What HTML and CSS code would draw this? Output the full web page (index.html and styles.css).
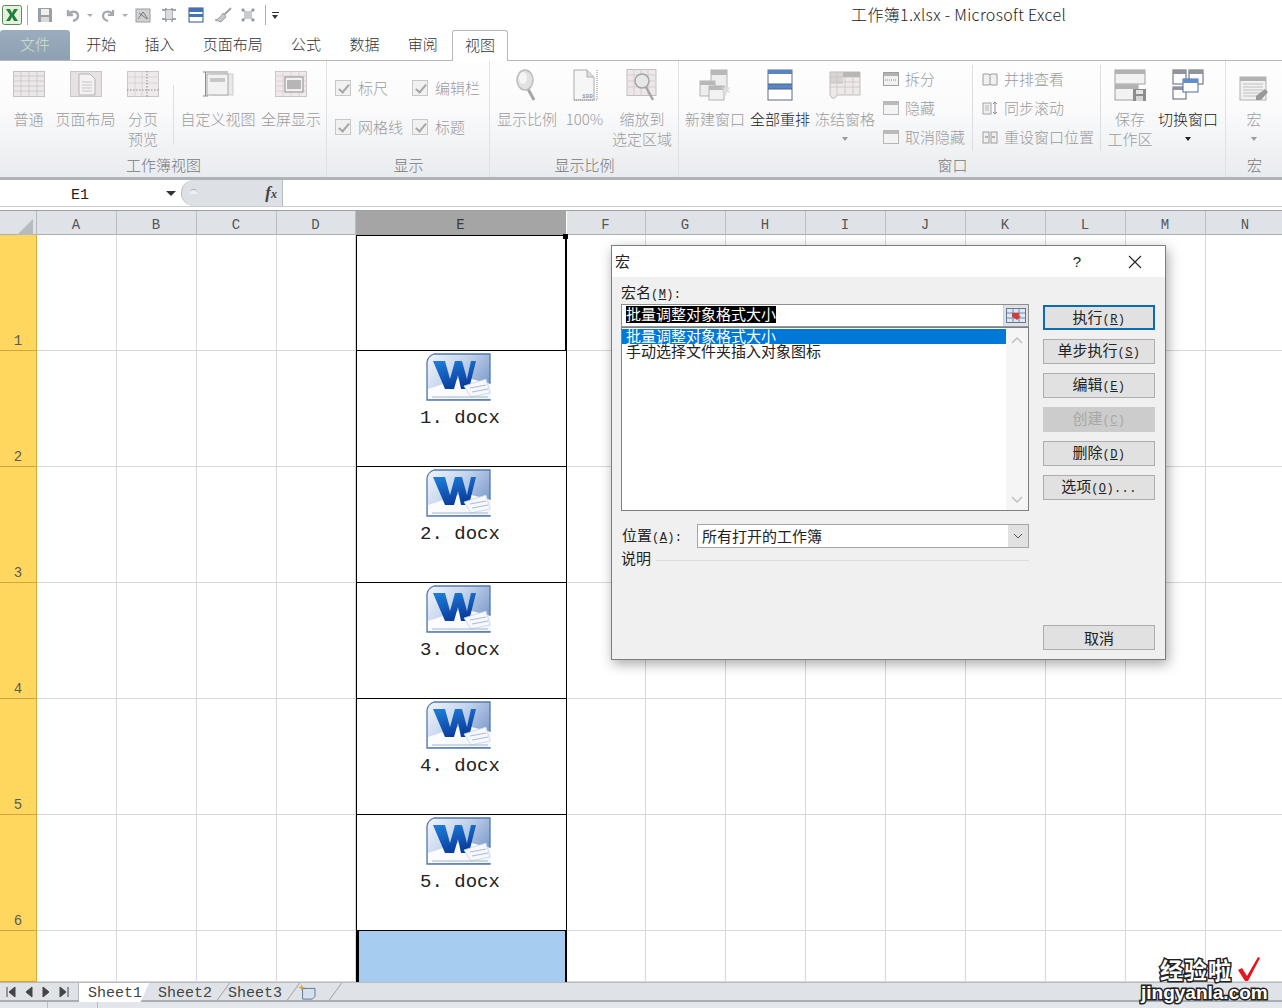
FILE: index.html
```html
<!DOCTYPE html>
<html lang="zh-CN">
<head>
<meta charset="utf-8">
<title>工作簿1.xlsx - Microsoft Excel</title>
<link rel="stylesheet" href="styles.css">
</head>
<body>
<svg class="defs" width="0" height="0" aria-hidden="true">
  <defs>
    <linearGradient id="wordbg" x1="0" y1="0" x2="1" y2="0.6"><stop offset="0" stop-color="#f2f6fc"/><stop offset=".5" stop-color="#c4d4ec"/><stop offset="1" stop-color="#7e9ccc"/></linearGradient>
    <linearGradient id="wordw" x1="0" y1="0" x2="0.4" y2="1"><stop offset="0" stop-color="#1f7fdc"/><stop offset="1" stop-color="#0a3d9c"/></linearGradient>
    <symbol id="word" viewBox="0 0 66 48">
      <path d="M8 1H64V47H1V9Q2 3 8 1Z" fill="url(#wordbg)" stroke="#5478b0" stroke-width="1.3"/>
      <path d="M2 36L38 24L65 31V46H2Z" fill="#fff" opacity=".92"/>
      <path d="M7 8H19L24 26L29 8H36L41 26L45 8H50L43 36H35L32 22L28 36H19Z" fill="url(#wordw)"/>
      <path d="M38 33L60 26L64 40L45 44Z" fill="#f6f8fc" stroke="#c4d0e4" stroke-width=".8"/>
      <path d="M44 35L60 32M46 39L62 36" stroke="#a9bbd8" fill="none"/>
      <path d="M6 44H62" stroke="#9fb5d8"/>
    </symbol>
    <symbol id="i-normal" viewBox="0 0 32 26"><rect x=".5" y=".5" width="31" height="25" fill="#ebe8e9" stroke="#c4c1c2"/><path d="M0 5H32M0 10H32M0 15H32M0 20H32M8 0V26M16 0V26M24 0V26" stroke="#d0c8ca"/></symbol>
    <symbol id="i-page" viewBox="0 0 32 26"><rect x=".5" y=".5" width="31" height="25" fill="#e6e2e4" stroke="#c9c6c8"/><path d="M9 3H20L25 8V24H9Z" fill="#f4f3f3" stroke="#b5b3b3"/><path d="M12 11H22M12 14H22M12 17H22M12 20H22" stroke="#c6c3c3"/></symbol>
    <symbol id="i-break" viewBox="0 0 32 26"><rect x=".5" y=".5" width="31" height="25" fill="#eeeaec" stroke="#c9c6c8"/><path d="M0 6H32M0 12H32M8 0V26M15 0V26" stroke="#dad2d4"/><path d="M0 19H32M20 0V26" stroke="#8e8c8c" stroke-dasharray="1.5 1.5"/></symbol>
    <symbol id="i-custom" viewBox="0 0 32 26"><rect x="9" y="3" width="22" height="21" fill="#e9e7e7" stroke="#cfcccc"/><rect x="5" y="3" width="21" height="21" fill="#f3f2f2" stroke="#a9a7a7"/><rect x="8" y="7" width="15" height="4" fill="#c9c6c6"/><path d="M1 1H6M3.5 1V25M1 25H6M6 1H26" stroke="#8d8b8b" fill="none"/></symbol>
    <symbol id="i-full" viewBox="0 0 32 26"><rect x=".5" y=".5" width="31" height="25" fill="#eee9ea" stroke="#c9c6c8"/><path d="M0 5H32M0 10H32M0 15H32M0 20H32M8 0V26M16 0V26M24 0V26" stroke="#ddd0d2"/><rect x="10" y="6" width="18" height="15" fill="#f2f1f1" stroke="#8f8d8d"/><rect x="12" y="9" width="14" height="9" fill="#b7b5b5"/></symbol>
    <symbol id="i-zoom" viewBox="0 0 32 32"><path d="M16 18L23 31" stroke="#a8a5a5" stroke-width="3"/><ellipse cx="14" cy="11" rx="8" ry="10" fill="#e2e1e1" stroke="#bdbbbb" stroke-width="1.5"/><ellipse cx="12" cy="9" rx="4" ry="6" fill="#f5f5f5"/></symbol>
    <symbol id="i-100" viewBox="0 0 32 32"><path d="M5 1H18L25 8V31H5Z" fill="#f6f6f6" stroke="#adabab"/><path d="M18 1V8H25" fill="#ddd" stroke="#adabab"/><path d="M28 1V31M5 31H29" stroke="#8b8b8b" stroke-dasharray="1 1"/><text class="svg-tiny" x="13" y="29">100</text></symbol>
    <symbol id="i-fit" viewBox="0 0 32 32"><rect x="1" y=".5" width="29" height="26" fill="#ece8e9" stroke="#c3bfc1"/><path d="M1 6H30M1 12H30M1 18H30M8 0V26M15 0V26M22 0V26" stroke="#d7cccf"/><path d="M20 18L27 31" stroke="#a8a5a5" stroke-width="2.5"/><circle cx="16" cy="12" r="7" fill="#e8e7e7" stroke="#a6a4a4" stroke-width="1.5"/></symbol>
    <symbol id="i-new" viewBox="0 0 32 32"><rect x="12" y="1" width="16" height="20" fill="#eee" stroke="#b5b3b3"/><rect x="12" y="1" width="16" height="5" fill="#b9b7b7"/><rect x="1" y="12" width="15" height="15" fill="#eee" stroke="#b5b3b3"/><rect x="1" y="12" width="15" height="4" fill="#b9b7b7"/><rect x="10" y="17" width="15" height="14" fill="#f2f2f2" stroke="#b5b3b3"/><rect x="10" y="17" width="15" height="4" fill="#b9b7b7"/><path d="M27 14L28 19L32 18L29 21L32 24L28 23L27 28L25 23L22 24L25 21L22 18L26 19Z" fill="#dedcdc"/></symbol>
    <symbol id="i-arrange" viewBox="0 0 26 32"><rect x="1" y="1" width="24" height="30" fill="#fff" stroke="#5e6d80"/><rect x="1" y="1" width="24" height="4" fill="#5a85c4"/><rect x="1" y="15" width="24" height="5" fill="#5a85c4"/><path d="M1 15H25M1 20H25" stroke="#49648f"/></symbol>
    <symbol id="i-freeze" viewBox="0 0 32 32"><path d="M1 3H31V26H8L6 29H3L1 26Z" fill="#eeeaea" stroke="#bfbcbc"/><path d="M1 8H31M1 13H31M1 18H31M8 3V26M16 3V26M24 3V26" stroke="#d0c9c9"/><path d="M1 3H14V15H1Z" fill="#c9c5c5" opacity=".6"/><path d="M14 3H31V8H14Z" fill="#b9b6b6"/></symbol>
    <symbol id="i-savews" viewBox="0 0 32 32"><rect x="1" y="1" width="30" height="14" fill="#f2f2f2" stroke="#a2a0a0"/><rect x="1" y="1" width="30" height="4" fill="#b3b1b1"/><rect x="1" y="16" width="23" height="15" fill="#f2f2f2" stroke="#a2a0a0"/><rect x="1" y="16" width="23" height="4" fill="#b3b1b1"/><rect x="19" y="20" width="13" height="12" fill="#8d8b8b"/><rect x="22" y="21" width="7" height="4" fill="#e4e4e4"/><rect x="22" y="27" width="7" height="5" fill="#d5d5d5"/></symbol>
    <symbol id="i-switch" viewBox="0 0 32 32"><rect x="1" y="1" width="13" height="14" fill="#fff" stroke="#5d646c"/><rect x="1" y="1" width="13" height="4" fill="#8e959c"/><rect x="17" y="1" width="14" height="14" fill="#fff" stroke="#5d646c"/><rect x="17" y="1" width="14" height="4" fill="#8e959c"/><rect x="1" y="18" width="13" height="12" fill="#fff" stroke="#5d646c"/><rect x="1" y="18" width="13" height="3" fill="#8e959c"/><rect x="11" y="10" width="15" height="13" fill="#fff" stroke="#4c6d9c"/><rect x="11" y="10" width="15" height="4" fill="#5f8fce"/></symbol>
    <symbol id="i-macro" viewBox="0 0 30 32"><rect x="1" y="8" width="26" height="23" fill="#f1f1f1" stroke="#b2b0b0"/><rect x="1" y="8" width="26" height="4" fill="#b3b1b1"/><path d="M4 15H24M4 18H24M4 21H24M4 24H24M4 27H24" stroke="#c1bfbf"/><path d="M17 27L26 20L29 23L22 31H17Z" fill="#999"/></symbol>
    <symbol id="s-split" viewBox="0 0 16 14"><rect x=".5" y=".5" width="15" height="13" fill="#f1f1f1" stroke="#9f9d9d"/><rect x="1" y="1" width="14" height="3" fill="#b3b1b1"/><path d="M2 8H14" stroke="#8f8d8d" stroke-dasharray="1 1"/></symbol>
    <symbol id="s-hide" viewBox="0 0 16 14"><rect x=".5" y=".5" width="15" height="13" fill="#f4f4f4" stroke="#b8b6b6"/><rect x="1" y="1" width="14" height="3" fill="#bbb9b9"/></symbol>
    <symbol id="s-side" viewBox="0 0 16 14"><path d="M1 2H7L8 3L9 2H15V13H9L8 12L7 13H1Z" fill="#f1f1f1" stroke="#9f9d9d"/><path d="M8 3V12" stroke="#9f9d9d"/></symbol>
    <symbol id="s-sync" viewBox="0 0 16 14"><rect x="1" y="2" width="8" height="11" fill="#efefef" stroke="#a6a4a4"/><path d="M3 5H7M3 7H7M3 9H7" stroke="#b9b7b7"/><path d="M13 1V13M11 3L13 1L15 3M11 11L13 13L15 11" fill="none" stroke="#8f8d8d"/></symbol>
    <symbol id="s-reset" viewBox="0 0 16 14"><rect x="1" y="2" width="6" height="11" fill="#efefef" stroke="#9f9d9d"/><rect x="9" y="2" width="6" height="11" fill="#efefef" stroke="#9f9d9d"/><path d="M3 7H6M13 7H10" stroke="#777"/></symbol>
  </defs>
</svg>

<div class="app">
  <header class="titlebar">
    <svg class="logo" viewBox="0 0 20 20" width="20" height="20"><rect x=".5" y=".5" width="19" height="19" rx="2" fill="#e6f0dd" stroke="#5c8a55"/><path d="M4 4H8L10 8L12 4H16L12 10L16 16H12L10 12L8 16H4L8 10Z" fill="#20813c"/></svg>
    <span class="qat-sep"></span>
    <svg class="qat q-save" viewBox="0 0 16 16" width="16" height="16"><path d="M1 1H14L15 2V15H1Z" fill="#9a9fa5"/><rect x="4" y="2" width="8" height="6" fill="#eee"/><rect x="4" y="10" width="8" height="5" fill="#d9d9d9"/></svg>
    <svg class="qat q-undo" viewBox="0 0 16 16" width="16" height="16"><path d="M3 3V8H8M3 8C6 3 13 4 13 9C13 12 11 13 8 14" fill="none" stroke="#a5a9ae" stroke-width="2.4"/></svg>
    <span class="qat-caret q-c1"></span>
    <svg class="qat q-redo" viewBox="0 0 16 16" width="16" height="16"><path d="M13 3V8H8M13 8C10 3 3 4 3 9C3 12 5 13 8 14" fill="none" stroke="#a5a9ae" stroke-width="2.2"/></svg>
    <span class="qat-caret q-c2"></span>
    <svg class="qat q-a" viewBox="0 0 16 16" width="16" height="16"><rect x="1" y="2" width="14" height="13" fill="#cfd1d2" stroke="#9b9da0"/><path d="M3 12L8 5L13 12M4 6L12 12" stroke="#777a7d" fill="none"/></svg>
    <svg class="qat q-b" viewBox="0 0 16 16" width="16" height="16"><path d="M1 3H15M1 12H15M5 1V15M11 1V15" stroke="#888c90" stroke-width="1.3" fill="none"/><rect x="5" y="3" width="6" height="9" fill="#d9dbdc"/></svg>
    <svg class="qat q-c" viewBox="0 0 16 16" width="16" height="16"><rect x="1" y="1" width="14" height="14" fill="#fff" stroke="#33557f"/><rect x="1" y="1" width="14" height="4" fill="#3f74bb"/><rect x="1" y="7" width="14" height="3" fill="#3f74bb"/></svg>
    <svg class="qat q-d" viewBox="0 0 18 16" width="18" height="16"><path d="M17 1L9 9" stroke="#9ea1a4" stroke-width="2"/><path d="M9 6L12 10L7 15L1 13C5 12 7 9 9 6Z" fill="#c4c7c9" stroke="#a3a6a8"/></svg>
    <svg class="qat q-e" viewBox="0 0 16 16" width="16" height="16"><path d="M3 3L13 13M13 3L3 13" stroke="#9da1a5" stroke-width="1.2"/><rect x="4" y="4" width="8" height="8" fill="#c9ccce"/><path d="M1 3H5M3 1V5M11 3H15M13 1V5M1 13H5M3 11V15M11 13H15M13 11V15" stroke="#8a8d90"/></svg>
    <span class="qat-sep q-sep2"></span>
    <span class="qat-more"></span>
    <h1 class="app-title">工作簿1.xlsx - Microsoft Excel</h1>
  </header>

  <nav class="tabs">
    <span class="tab-file">文件</span>
    <span class="tab">开始</span>
    <span class="tab">插入</span>
    <span class="tab">页面布局</span>
    <span class="tab">公式</span>
    <span class="tab">数据</span>
    <span class="tab">审阅</span>
    <span class="tab tab-on">视图</span>
  </nav>

  <section class="ribbon">
    <div class="group g-views">
      <div class="group-body">
        <div class="big w57"><svg class="ic" width="32" height="26"><use href="#i-normal"/></svg><span>普通</span></div>
        <div class="big w57"><svg class="ic" width="32" height="26"><use href="#i-page"/></svg><span>页面布局</span></div>
        <div class="big w58"><svg class="ic" width="32" height="26"><use href="#i-break"/></svg><span>分页<br>预览</span></div>
        <span class="vsep vs-views"></span>
        <div class="big w78"><svg class="ic" width="32" height="26"><use href="#i-custom"/></svg><span>自定义视图</span></div>
        <div class="big w68"><svg class="ic" width="32" height="26"><use href="#i-full"/></svg><span>全屏显示</span></div>
      </div>
      <div class="group-name">工作簿视图</div>
    </div>
    <div class="group g-show">
      <div class="group-body checks">
        <label class="check"><span class="box"></span>标尺</label>
        <label class="check"><span class="box"></span>编辑栏</label>
        <label class="check"><span class="box"></span>网格线</label>
        <label class="check"><span class="box"></span>标题</label>
      </div>
      <div class="group-name">显示</div>
    </div>
    <div class="group g-zoom">
      <div class="group-body">
        <div class="big w60"><svg class="ic" width="32" height="32"><use href="#i-zoom"/></svg><span>显示比例</span></div>
        <div class="big w55"><svg class="ic" width="32" height="32"><use href="#i-100"/></svg><span>100%</span></div>
        <div class="big w60"><svg class="ic" width="32" height="32"><use href="#i-fit"/></svg><span>缩放到<br>选定区域</span></div>
      </div>
      <div class="group-name">显示比例</div>
    </div>
    <div class="group g-window">
      <div class="group-body">
        <div class="big w60"><svg class="ic" width="32" height="32"><use href="#i-new"/></svg><span>新建窗口</span></div>
        <div class="big w60 on"><svg class="ic" width="26" height="32"><use href="#i-arrange"/></svg><span>全部重排</span></div>
        <div class="big w60"><svg class="ic" width="32" height="32"><use href="#i-freeze"/></svg><span>冻结窗格</span><i class="caret"></i></div>
        <div class="smalls s-a">
          <div class="small"><svg width="16" height="14"><use href="#s-split"/></svg><span>拆分</span></div>
          <div class="small"><svg width="16" height="14"><use href="#s-hide"/></svg><span>隐藏</span></div>
          <div class="small"><svg width="16" height="14"><use href="#s-hide"/></svg><span>取消隐藏</span></div>
        </div>
        <span class="vsep vs-tall"></span>
        <div class="smalls s-b">
          <div class="small"><svg width="16" height="14"><use href="#s-side"/></svg><span>并排查看</span></div>
          <div class="small"><svg width="16" height="14"><use href="#s-sync"/></svg><span>同步滚动</span></div>
          <div class="small"><svg width="16" height="14"><use href="#s-reset"/></svg><span>重设窗口位置</span></div>
        </div>
        <span class="vsep vs-tall"></span>
        <div class="big w46 first-ws"><svg class="ic" width="32" height="32"><use href="#i-savews"/></svg><span>保存<br>工作区</span></div>
        <div class="big w60 on"><svg class="ic" width="32" height="32"><use href="#i-switch"/></svg><span>切换窗口</span><i class="caret"></i></div>
      </div>
      <div class="group-name">窗口</div>
    </div>
    <div class="group g-macro">
      <div class="group-body">
        <div class="big w56"><svg class="ic" width="30" height="32"><use href="#i-macro"/></svg><span>宏</span><i class="caret"></i></div>
      </div>
      <div class="group-name">宏</div>
    </div>
  </section>

  <section class="formula">
    <div class="namebox"><span class="name-val">E1</span><i class="name-caret"></i></div>
    <div class="fx-wrap"><span class="fx-dot"></span><span class="fx">f<small>x</small></span></div>
    <div class="fx-input"></div>
  </section>

  <section class="sheet">
    <div class="row head">
      <div class="corner"><svg width="17" height="17" viewBox="0 0 17 17"><path d="M17 0V17H0Z" fill="#b6bbc1"/></svg></div>
      <div class="ch">A</div><div class="ch">B</div><div class="ch">C</div><div class="ch">D</div><div class="ch ch-on">E</div><div class="ch">F</div><div class="ch">G</div><div class="ch">H</div><div class="ch">I</div><div class="ch">J</div><div class="ch">K</div><div class="ch">L</div><div class="ch">M</div><div class="ch">N</div>
    </div>
    <div class="row r-tall">
      <div class="rh">1</div><div class="c"></div><div class="c"></div><div class="c"></div><div class="c"></div>
      <div class="e e-active"><i class="handle"></i></div>
      <div class="c"></div><div class="c"></div><div class="c"></div><div class="c"></div><div class="c"></div><div class="c"></div><div class="c"></div><div class="c"></div><div class="c"></div>
    </div>
    <div class="row r-tall">
      <div class="rh">2</div><div class="c"></div><div class="c"></div><div class="c"></div><div class="c"></div>
      <div class="e"><svg class="word" width="66" height="48"><use href="#word"/></svg><span class="fname">1. docx</span></div>
      <div class="c"></div><div class="c"></div><div class="c"></div><div class="c"></div><div class="c"></div><div class="c"></div><div class="c"></div><div class="c"></div><div class="c"></div>
    </div>
    <div class="row r-tall">
      <div class="rh">3</div><div class="c"></div><div class="c"></div><div class="c"></div><div class="c"></div>
      <div class="e"><svg class="word" width="66" height="48"><use href="#word"/></svg><span class="fname">2. docx</span></div>
      <div class="c"></div><div class="c"></div><div class="c"></div><div class="c"></div><div class="c"></div><div class="c"></div><div class="c"></div><div class="c"></div><div class="c"></div>
    </div>
    <div class="row r-tall">
      <div class="rh">4</div><div class="c"></div><div class="c"></div><div class="c"></div><div class="c"></div>
      <div class="e"><svg class="word" width="66" height="48"><use href="#word"/></svg><span class="fname">3. docx</span></div>
      <div class="c"></div><div class="c"></div><div class="c"></div><div class="c"></div><div class="c"></div><div class="c"></div><div class="c"></div><div class="c"></div><div class="c"></div>
    </div>
    <div class="row r-tall">
      <div class="rh">5</div><div class="c"></div><div class="c"></div><div class="c"></div><div class="c"></div>
      <div class="e"><svg class="word" width="66" height="48"><use href="#word"/></svg><span class="fname">4. docx</span></div>
      <div class="c"></div><div class="c"></div><div class="c"></div><div class="c"></div><div class="c"></div><div class="c"></div><div class="c"></div><div class="c"></div><div class="c"></div>
    </div>
    <div class="row r-tall">
      <div class="rh">6</div><div class="c"></div><div class="c"></div><div class="c"></div><div class="c"></div>
      <div class="e"><svg class="word" width="66" height="48"><use href="#word"/></svg><span class="fname">5. docx</span></div>
      <div class="c"></div><div class="c"></div><div class="c"></div><div class="c"></div><div class="c"></div><div class="c"></div><div class="c"></div><div class="c"></div><div class="c"></div>
    </div>
    <div class="row r-last">
      <div class="rh"></div><div class="c"></div><div class="c"></div><div class="c"></div><div class="c"></div>
      <div class="e e-blue"></div>
      <div class="c"></div><div class="c"></div><div class="c"></div><div class="c"></div><div class="c"></div><div class="c"></div><div class="c"></div><div class="c"></div><div class="c"></div>
    </div>
  </section>

  <footer class="sheetbar">
    <div class="sheet-nav">
      <svg width="10" height="12" viewBox="0 0 10 12"><path d="M1 1V11M9 1V11L3 6Z" fill="#444" stroke="#444"/></svg>
      <svg width="8" height="12" viewBox="0 0 8 12"><path d="M7 1V11L1 6Z" fill="#444" stroke="#444"/></svg>
      <svg width="8" height="12" viewBox="0 0 8 12"><path d="M1 1V11L7 6Z" fill="#444" stroke="#444"/></svg>
      <svg width="10" height="12" viewBox="0 0 10 12"><path d="M9 1V11M1 1V11L7 6Z" fill="#444" stroke="#444"/></svg>
    </div>
    <div class="stab stab-on">Sheet1</div>
    <div class="stab">Sheet2</div>
    <div class="stab">Sheet3</div>
    <div class="stab stab-new"><svg class="new-ic" width="18" height="16" viewBox="0 0 20 18"><path d="M5 5H19V14L16 17H5Z" fill="#d5e0ec" stroke="#55708f"/><path d="M4 0L5 3L8 4L5 5L4 8L3 5L0 4L3 3Z" fill="#e6a92f"/></svg></div>
  </footer>
  <div class="statusbar"><i></i><i></i></div>
</div>

<div class="dialog">
  <div class="dlg-title">
    <span class="dlg-name">宏</span>
    <span class="dlg-help">?</span>
    <svg class="dlg-close" width="14" height="14" viewBox="0 0 14 14"><path d="M1 1L13 13M13 1L1 13" stroke="#222" stroke-width="1.1"/></svg>
  </div>
  <div class="dlg-body">
    <div class="dlg-left">
      <div class="dlg-label">宏名<span class="lat">(<u>M</u>):</span></div>
      <div class="macro-input">
        <span class="macro-val"><span class="sel-text">批量调整对象格式大小</span></span>
        <span class="picker"><svg width="20" height="15" viewBox="0 0 20 15"><rect x=".5" y=".5" width="19" height="14" fill="#dfe8f2" stroke="#5f7a9a"/><path d="M1 5H19M1 10H19M7 1V14M13 1V14" stroke="#6f8cab"/><path d="M6 5H13V8H15L11 12L7 9H6Z" fill="#d33c3c"/></svg></span>
      </div>
      <div class="macro-list">
        <div class="items">
          <div class="item item-on">批量调整对象格式大小</div>
          <div class="item">手动选择文件夹插入对象图标</div>
        </div>
        <div class="scroll">
          <svg width="12" height="8" viewBox="0 0 12 8"><path d="M1 6L6 1L11 6" fill="none" stroke="#c3c3c3" stroke-width="1.6"/></svg>
          <svg width="12" height="8" viewBox="0 0 12 8"><path d="M1 2L6 7L11 2" fill="none" stroke="#c3c3c3" stroke-width="1.6"/></svg>
        </div>
      </div>
      <div class="loc">
        <span class="loc-label">位置<span class="lat">(<u>A</u>):</span></span>
        <div class="select"><span class="select-val">所有打开的工作簿</span><span class="select-btn"><svg width="10" height="6" viewBox="0 0 10 6"><path d="M1 1L5 5L9 1" fill="none" stroke="#555"/></svg></span></div>
      </div>
      <div class="desc"><span>说明</span><i></i></div>
    </div>
    <div class="dlg-right">
      <button class="btn btn-main">执行<span class="lat">(<u>R</u>)</span></button>
      <button class="btn">单步执行<span class="lat">(<u>S</u>)</span></button>
      <button class="btn">编辑<span class="lat">(<u>E</u>)</span></button>
      <button class="btn btn-off">创建<span class="lat">(<u>C</u>)</span></button>
      <button class="btn">删除<span class="lat">(<u>D</u>)</span></button>
      <button class="btn">选项<span class="lat">(<u>O</u>)...</span></button>
      <button class="btn btn-cancel">取消</button>
    </div>
  </div>
</div>

<div class="watermark">
  <div class="wm-top"><span class="wm-cn">经验啦</span><svg width="24" height="26" viewBox="0 0 24 26"><path d="M1 14L5 12L10 20L21 1L23 2L11 25H8Z" fill="#e8141c"/></svg></div>
  <div class="wm-en">jingyanla.com</div>
</div>
</body>
</html>
```
FILE: styles.css
```css
* { box-sizing: border-box; }
html, body { margin: 0; padding: 0; }
body {
  width: 1282px;
  height: 1008px;
  overflow: hidden;
  position: relative;
  background: #fff;
  color: #222;
  font-family: "Noto Sans CJK SC", "Liberation Sans", sans-serif;
  font-size: 15px;
  font-weight: 300;
}
.defs { position: absolute; }
.app { display: flex; flex-direction: column; height: 1008px; }

/* title bar */
.titlebar { height: 30px; display: flex; align-items: center; position: relative; padding-left: 2px; background: #fff; }
.logo { flex: none; }
.qat-sep { width: 1px; height: 20px; background: #a9adb1; margin-left: 5px; flex: none; }
.qat { flex: none; }
.q-save { margin-left: 9px; }
.q-undo { margin-left: 12px; }
.qat-caret { width: 0; height: 0; border: 3px solid transparent; border-top-color: #a9adb1; margin: 3px 0 0 6px; flex: none; }
.q-redo { margin-left: 7px; }
.q-a { margin-left: 7px; }
.q-b { margin-left: 10px; }
.q-c { margin-left: 11px; }
.q-d { margin-left: 10px; }
.q-e { margin-left: 8px; }
.q-sep2 { margin-left: 9px; }
.qat-more { width: 7px; height: 7px; margin-left: 6px; border-top: 1px solid #333; background: linear-gradient(#fff 0 2px, transparent 2px); position: relative; flex: none; }
.qat-more::after { content: ""; position: absolute; left: 0; top: 2px; border: 3.5px solid transparent; border-top: 4px solid #333; }
.app-title { margin: 0 0 0 auto; padding-right: 216px; font-size: 16px; letter-spacing: .33px; font-weight: 300; color: #222; line-height: 28px; height: 30px; white-space: nowrap; }

/* tabs */
.tabs { height: 31px; display: flex; align-items: stretch; gap: .28px; border-bottom: 1px solid #b5b9bd; color: #333; line-height: 28px; }
.tab-file { width: 70px; margin-right: 2px; text-align: center; color: #d2e2cd; border-radius: 3px 3px 0 0; background: linear-gradient(#9aacbd, #8ea1b3); }
.tab { padding: 0 14px; white-space: nowrap; }
.tab-on { height: 31px; width: 56px; padding: 0; text-align: center; margin-left: 0; border: 1px solid #b5b9bd; border-bottom: 0; border-radius: 3px 3px 0 0; background: #fff; }

/* ribbon */
.ribbon { height: 119px; display: flex; background: linear-gradient(#fefefe 0, #fbfbfc 40%, #e9ecef 100%); border-bottom: 3px solid #aeb3b8; color: #9b9b9b; }
.group { display: flex; flex-direction: column; border-right: 1px solid #dfe2e5; flex: none; }
.group-body { height: 93px; display: flex; align-items: flex-start; }
.group-name { height: 23px; line-height: 22px; text-align: center; color: #777; padding-left: 1px; }
.g-views { width: 327px; }
.g-show { width: 163px; }
.g-zoom { width: 189px; }
.g-zoom .group-body { padding-left: 7px; }
.g-window { width: 547px; }
.g-window .group-body { padding-left: 6px; gap: 5px; }
.g-macro { flex: 1; border-right: 0; }

.big { flex: none; display: flex; flex-direction: column; align-items: center; text-align: center; line-height: 20px; padding-top: 8px; white-space: nowrap; }
.big .ic { display: block; flex: none; }
.big span { display: block; }
.big svg[height="26"] { height: 26px; margin: 2px 0 12px; }
.big svg[height="32"] { height: 32px; margin: 0 0 8px; }
.on { color: #222; }
.w46 { width: 46px; }
.w55 { width: 55px; }
.w56 { width: 56px; }
.w57 { width: 57px; }
.w58 { width: 58px; }
.w60 { width: 60px; }
.w68 { width: 68px; }
.w78 { width: 78px; }
.caret { display: block; width: 0; height: 0; margin-top: 8px; border: 3px solid transparent; border-top: 4px solid currentColor; }
.vsep { flex: none; width: 1px; background: #dcdfe2; }
.vs-views { height: 60px; margin: 24px 5px 0 1px; }
.vs-tall { height: 86px; margin-top: 4px; }
.smalls { flex: none; display: flex; flex-direction: column; padding-top: 3px; }
.small { height: 29px; display: flex; align-items: center; gap: 6px; white-space: nowrap; }
.small svg { flex: none; }
.s-a { width: 84px; margin-left: 3px; }
.s-b { width: 113px; margin-left: 4px; }
.first-ws { margin-left: 1px; }

.checks { display: grid; grid-template-columns: 77px 1fr; grid-auto-rows: 18px; row-gap: 21px; padding: 16px 0 0 8px; align-content: start; }
.check { display: flex; align-items: center; gap: 7px; white-space: nowrap; }
.box { width: 16px; height: 16px; border: 1px solid #c7c7c7; background: #f1f1f1; position: relative; flex: none; }
.box::after { content: ""; position: absolute; left: 5px; top: 1px; width: 4px; height: 9px; border: solid #a7a7a7; border-width: 0 2px 2px 0; transform: rotate(40deg); }

.svg-tiny { font-family: "Liberation Mono", monospace; font-size: 6px; fill: #666; }

/* formula bar */
.formula { height: 27px; display: flex; background: #fff; border-bottom: 1px solid #c8ccd0; }
.namebox { width: 181px; position: relative; font-family: "Liberation Mono", monospace; font-size: 15px; font-weight: 400; color: #222; line-height: 32px; padding-left: 71px; }
.name-caret { position: absolute; left: 166px; top: 11px; border: 5px solid transparent; border-top: 5px solid #333; }
.fx-wrap { width: 102px; position: relative; background: #dde1e6; border: 1px solid #b8bcc1; border-width: 0 1px 0 1px; border-radius: 14px 0 0 14px; }
.fx-dot { position: absolute; left: 8px; top: 9px; width: 7px; height: 5px; border-radius: 4px 4px 0 0; background: #eef0f2; border-top: 1px solid #aab; }
.fx { position: absolute; right: 5px; top: 0; line-height: 26px; font-family: "Liberation Serif", serif; font-style: italic; font-weight: 700; font-size: 17px; color: #444; }
.fx small { font-size: 12px; }
.fx-input { flex: 1; }

/* sheet */
.sheet { margin-top: 3px; height: 772px; overflow: hidden; flex: none; }
.row { display: grid; grid-template-columns: 37px 80px 80px 80px 79px 211px 79px repeat(8, 80px); width: 1286px; }
.head { height: 25px; border-top: 1px solid #9aa0a6; background: #dfe3e8; border-bottom: 1px solid #a9aeb3; }
.corner { display: flex; align-items: flex-end; justify-content: flex-end; padding: 0 3px 3px 0; border-right: 1px solid #b3b8bd; }
.ch { font-family: "Liberation Mono", monospace; font-size: 14px; font-weight: 400; color: #555; text-align: center; line-height: 28px; padding-right: 1px; border-right: 1px solid #b9bec3; }
.ch-on { background: #a5a5a5; color: #3a3a3a; border-right-color: #fff; }
.r-tall { height: 116px; }
.r-last { height: 51px; }
.rh { background: #ffd75e; border-right: 1px solid #d9a93a; border-bottom: 1px solid #cda43f; font-family: "Liberation Mono", monospace; font-size: 14px; font-weight: 400; color: #5a5a5a; text-align: center; display: flex; align-items: flex-end; justify-content: center; line-height: 18px; }
.c { border-right: 1px solid #d8d8d8; border-bottom: 1px solid #d8d8d8; }
.e { border: 1px solid #000; border-top: 0; display: flex; flex-direction: column; align-items: center; padding-top: 2px; background: #fff; position: relative; z-index: 1; }
.word { display: block; flex: none; margin-right: 5px; }
.fname { font-family: "Liberation Mono", monospace; font-size: 19px; font-weight: 400; color: #222; line-height: 24px; margin: 5px 3px 0 0; }
.e-active { border: 2px solid #000; border-width: 1px 2px 1px 1px; }
.handle { position: absolute; right: -3px; top: -2px; width: 5px; height: 5px; background: #000; }
.e-blue { background: #a6cdf0; border-width: 2px 2px 0 3px; padding: 0; }

/* sheet tabs */
.sheetbar { height: 20px; margin-top: 0; display: flex; align-items: stretch; background: #dfe3e8; border-top: 1px solid #b7bbc0; border-bottom: 2px solid #a9adb2; font-family: "Liberation Mono", monospace; font-size: 15px; font-weight: 400; color: #444; flex: none; }
.sheet-nav { width: 79px; display: flex; align-items: center; gap: 9px; padding-left: 6px; border-right: 1px solid #b3b7bc; flex: none; }
.stab { width: 70px; padding-left: 9px; line-height: 21px; position: relative; flex: none; }
.stab::after { content: ""; position: absolute; right: -5px; top: 0; height: 17px; border-right: 1px solid #9ca1a7; transform: skewX(-36deg); }
.stab-on { background: #fff; color: #444; height: 19px; clip-path: polygon(0 0, 100% 0, 88% 100%, 0 100%); padding-left: 9px; }
.stab-on::after { display: none; }
.stab-new { width: 42px; padding: 0 0 0 9px; }
.new-ic { display: block; margin-top: 1px; }
.statusbar { flex: 1; background: #e3e6ea; display: flex; padding-left: 47px; gap: 49px; }
.statusbar i { width: 1px; background: #b9bdc2; }

/* dialog */
.dialog { position: absolute; left: 611px; top: 245px; width: 555px; height: 415px; background: #f0f0f0; border: 1px solid #7d7d7d; box-shadow: 2px 4px 12px rgba(0,0,0,.35); z-index: 5; display: flex; flex-direction: column; font-weight: 400; color: #222; }
.dlg-title { height: 31px; background: #fff; display: flex; align-items: center; padding-left: 3px; flex: none; }
.dlg-name { line-height: 28px; height: 30px; }
.dlg-help { margin-left: auto; font-family: "Liberation Sans", sans-serif; font-size: 15px; }
.dlg-close { margin: 0 23px 0 47px; }
.dlg-body { flex: 1; display: flex; padding: 0 10px 9px 9px; min-height: 0; }
.dlg-left { width: 408px; flex: none; }
.dlg-label { height: 27px; line-height: 16px; padding-top: 7px; }
.lat { font-family: "Liberation Mono", monospace; font-size: 12px; letter-spacing: .4px; }
.macro-input { height: 23px; border: 1px solid #8e8e8e; border-bottom-color: #8e9aa6; background: #fff; display: flex; align-items: stretch; }
.macro-val { flex: 1; padding: 0 0 0 4px; line-height: 18px; }
.sel-text { background: #000; color: #fff; display: inline-block; height: 17px; line-height: 16px; margin-top: 1px; }
.picker { width: 25px; background: #e1e1e1; display: flex; align-items: center; justify-content: center; border-left: 1px solid #cfcfcf; }
.macro-list { height: 184px; border: 1px solid #7f7f7f; background: #fff; display: flex; }
.items { flex: 1; padding: 1px 0 0 0; }
.item { height: 15px; line-height: 13px; padding-left: 4px; white-space: nowrap; }
.item-on { background: #0078d7; color: #fff; }
.scroll { width: 22px; background: #f5f5f5; display: flex; flex-direction: column; justify-content: space-between; align-items: center; padding: 9px 0 7px; }
.loc { display: flex; align-items: center; margin-top: 13px; height: 24px; line-height: 22px; }
.loc-label { width: 76px; padding-left: 1px; }
.select { flex: 1; height: 24px; border: 1px solid #a5a5a5; background: #fff; display: flex; }
.select-val { flex: 1; padding-left: 4px; line-height: 21px; }
.select-btn { width: 20px; background: #e1e1e1; display: flex; align-items: center; justify-content: center; }
.desc { display: flex; align-items: center; gap: 5px; height: 24px; padding-left: 0; }
.desc span { line-height: 20px; margin-top: -4px; }
.desc i { flex: 1; height: 1px; background: #dcdcdc; }
.dlg-right { margin-left: 14px; width: 112px; display: flex; flex-direction: column; gap: 9px; padding-top: 28px; }
.btn { height: 25px; padding: 0; border: 1px solid #adadad; background: #e1e1e1; font: inherit; color: #222; text-align: center; line-height: 20px; flex: none; }
.btn-main { border: 2px solid #0a6cb4; }
.btn-off { background: #cccccc; border-color: #cccccc; color: #a8a8a8; }
.btn-cancel { margin-top: auto; }

/* watermark */
.watermark { position: absolute; left: 1136px; top: 954px; width: 140px; z-index: 6; font-weight: 700; color: #fff; -webkit-text-stroke: 3px #222; paint-order: stroke fill; }
.wm-top { display: flex; align-items: center; padding-left: 24px; gap: 5px; height: 30px; }
.wm-cn { font-size: 23px; line-height: 30px; letter-spacing: 1px; paint-order: stroke fill; }
.wm-en { font-family: "Liberation Sans", sans-serif; font-size: 19px; line-height: 18px; padding-left: 5px; paint-order: stroke fill; white-space: nowrap; }
```
